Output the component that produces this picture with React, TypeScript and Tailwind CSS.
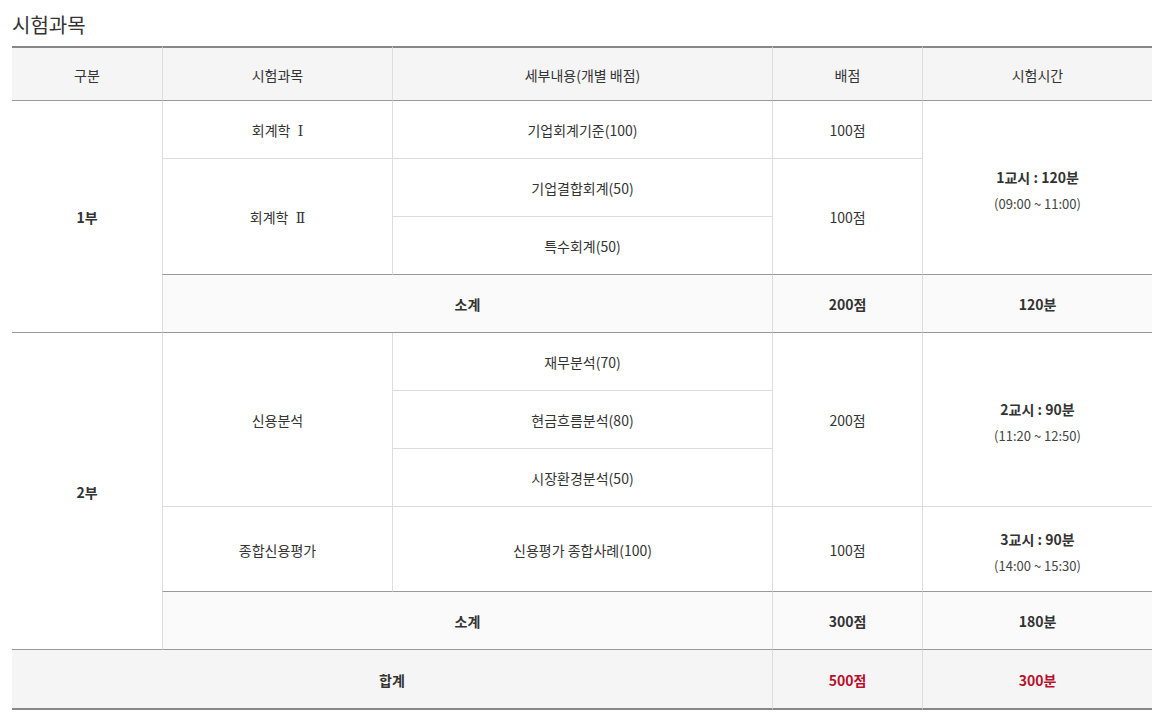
import React from "react";

const F = { fontFamily: '"Noto Sans CJK KR", "Noto Sans", sans-serif' };

const base = "text-center align-middle text-[14px] text-[#333] px-0 pb-0 pt-[2px]";
const L = "border-l border-l-[#dddddd]";
const BL = "border-b border-b-[#dddddd]";
const BD = "border-b border-b-[#999999]";

function Time({ t, r }: { t: string; r: string }) {
  return (
    <div className="pt-[4px]">
      <div className="font-bold leading-[24px] text-[14px]">{t}</div>
      <div className="mt-[3px] leading-[24px] text-[13px] text-[#444]">{r}</div>
    </div>
  );
}

function Roman({ c }: { c: string }) {
  return <span className="font-['DejaVu_Serif',serif] text-[14px] ml-[4px]">{c}</span>;
}

export default function App() {
  return (
    <div className="bg-white w-[1155px] min-h-[715px] pl-[12px]" style={F}>
      <div className="h-[46px] pt-[9px] text-[20px] leading-[32px] text-[#333]">시험과목</div>
      <table className="w-[1140px] border-separate border-spacing-0 table-fixed">
        <colgroup>
          <col className="w-[150px]" />
          <col className="w-[230px]" />
          <col className="w-[380px]" />
          <col className="w-[150px]" />
          <col className="w-[230px]" />
        </colgroup>
        <thead>
          <tr className="h-[55px]">
            {["구분", "시험과목", "세부내용(개별 배점)", "배점", "시험시간"].map((h, i) => (
              <th
                key={h}
                className={`${base} font-normal bg-[#f5f5f5] border-t-2 border-t-[#888888] ${BD} ${i > 0 ? L : ""}`}
              >
                {h}
              </th>
            ))}
          </tr>
        </thead>
        <tbody>
          <tr className="h-[58px]">
            <td rowSpan={4} className={`${base} font-bold ${BD}`}>1부</td>
            <td className={`${base} ${L} ${BL}`}>회계학 <Roman c="Ⅰ" /></td>
            <td className={`${base} ${L} ${BL}`}>기업회계기준(100)</td>
            <td className={`${base} ${L} ${BL}`}>100점</td>
            <td rowSpan={3} className={`${base} ${L} ${BD}`}>
              <Time t="1교시 : 120분" r="(09:00 ~ 11:00)" />
            </td>
          </tr>
          <tr className="h-[58px]">
            <td rowSpan={2} className={`${base} ${L} ${BD}`}>회계학 <Roman c="Ⅱ" /></td>
            <td className={`${base} ${L} ${BL}`}>기업결합회계(50)</td>
            <td rowSpan={2} className={`${base} ${L} ${BD}`}>100점</td>
          </tr>
          <tr className="h-[58px]">
            <td className={`${base} ${L} ${BD}`}>특수회계(50)</td>
          </tr>
          <tr className="h-[58px]">
            <td colSpan={2} className={`${base} font-bold bg-[#fafafa] ${L} ${BD}`}>소계</td>
            <td className={`${base} font-bold bg-[#fafafa] ${L} ${BD}`}>200점</td>
            <td className={`${base} font-bold bg-[#fafafa] ${L} ${BD}`}>120분</td>
          </tr>

          <tr className="h-[58px]">
            <td rowSpan={5} className={`${base} font-bold ${BD}`}>2부</td>
            <td rowSpan={3} className={`${base} ${L} ${BL}`}>신용분석</td>
            <td className={`${base} ${L} ${BL}`}>재무분석(70)</td>
            <td rowSpan={3} className={`${base} ${L} ${BL}`}>200점</td>
            <td rowSpan={3} className={`${base} ${L} ${BL}`}>
              <Time t="2교시 : 90분" r="(11:20 ~ 12:50)" />
            </td>
          </tr>
          <tr className="h-[58px]">
            <td className={`${base} ${L} ${BL}`}>현금흐름분석(80)</td>
          </tr>
          <tr className="h-[58px]">
            <td className={`${base} ${L} ${BL}`}>시장환경분석(50)</td>
          </tr>
          <tr className="h-[85px]">
            <td className={`${base} ${L} ${BD}`}>종합신용평가</td>
            <td className={`${base} ${L} ${BD}`}>신용평가 종합사례(100)</td>
            <td className={`${base} ${L} ${BD}`}>100점</td>
            <td className={`${base} ${L} ${BD}`}>
              <Time t="3교시 : 90분" r="(14:00 ~ 15:30)" />
            </td>
          </tr>
          <tr className="h-[58px]">
            <td colSpan={2} className={`${base} font-bold bg-[#fafafa] ${L} ${BD}`}>소계</td>
            <td className={`${base} font-bold bg-[#fafafa] ${L} ${BD}`}>300점</td>
            <td className={`${base} font-bold bg-[#fafafa] ${L} ${BD}`}>180분</td>
          </tr>
          <tr className="h-[60px]">
            <td colSpan={3} className={`${base} font-bold bg-[#f5f5f5] border-b-2 border-b-[#888888]`}>합계</td>
            <td className={`${base} font-bold text-[#b8102c] bg-[#f5f5f5] ${L} border-b-2 border-b-[#888888]`}>500점</td>
            <td className={`${base} font-bold text-[#b8102c] bg-[#f5f5f5] ${L} border-b-2 border-b-[#888888]`}>300분</td>
          </tr>
        </tbody>
      </table>
    </div>
  );
}
